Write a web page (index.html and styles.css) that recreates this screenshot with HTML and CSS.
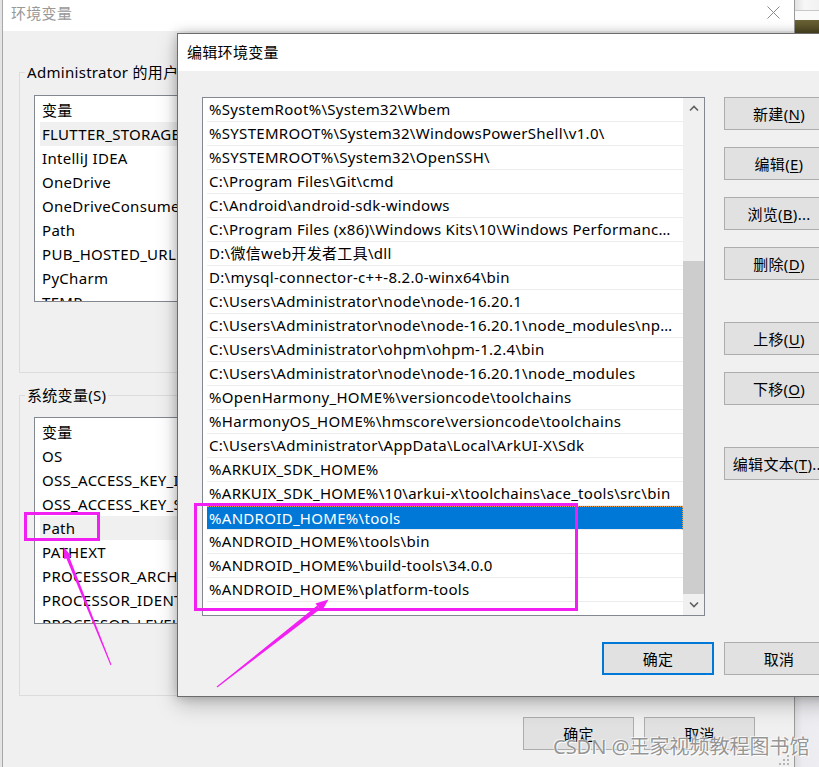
FILE: index.html
```html
<!DOCTYPE html>
<html lang="zh-CN">
<head>
<meta charset="utf-8">
<title>编辑环境变量</title>
<link rel="stylesheet" href="styles.css">
</head>
<body>
<div class="desk">
  <div class="side-top">
    <div class="st-a"></div>
    <div class="st-line"></div>
    <div class="st-b"></div>
    <div class="st-olive"></div>
  </div>
  <div class="side-bottom"></div>

  <div class="bgwin">
    <div class="titlebar">
      <span class="title">环境变量</span>
      <svg class="close" width="13" height="13" viewBox="0 0 13 13"><path d="M0.5 0.5 L12.5 12.5 M12.5 0.5 L0.5 12.5" stroke="#8a8a8a" stroke-width="1" fill="none"/></svg>
    </div>
    <div class="bbody">
      <div class="group g1">
        <span class="legend">Administrator 的用户变量(U)</span>
        <div class="list">
          <div class="lrow">变量</div>
          <div class="lrow hl">FLUTTER_STORAGE_BASE_URL</div>
          <div class="lrow">IntelliJ IDEA</div>
          <div class="lrow">OneDrive</div>
          <div class="lrow">OneDriveConsumer</div>
          <div class="lrow">Path</div>
          <div class="lrow">PUB_HOSTED_URL</div>
          <div class="lrow">PyCharm</div>
          <div class="lrow">TEMP</div>
        </div>
      </div>
      <div class="group g2">
        <span class="legend">系统变量(S)</span>
        <div class="list">
          <div class="lrow">变量</div>
          <div class="lrow">OS</div>
          <div class="lrow">OSS_ACCESS_KEY_ID</div>
          <div class="lrow">OSS_ACCESS_KEY_SECRET</div>
          <div class="lrow hl">Path</div>
          <div class="lrow">PATHEXT</div>
          <div class="lrow">PROCESSOR_ARCHITECTURE</div>
          <div class="lrow">PROCESSOR_IDENTIFIER</div>
          <div class="lrow">PROCESSOR_LEVEL</div>
        </div>
      </div>
      <div class="bactions">
        <button class="btn bbtn">确定</button>
        <button class="btn bbtn">取消</button>
      </div>
    </div>
    <svg class="grip" width="12" height="12" viewBox="0 0 12 12">
      <rect x="8" y="0" width="2" height="2" fill="#b5b5b5"/>
      <rect x="4" y="4" width="2" height="2" fill="#b5b5b5"/>
      <rect x="8" y="4" width="2" height="2" fill="#b5b5b5"/>
      <rect x="0" y="8" width="2" height="2" fill="#b5b5b5"/>
      <rect x="4" y="8" width="2" height="2" fill="#b5b5b5"/>
      <rect x="8" y="8" width="2" height="2" fill="#b5b5b5"/>
    </svg>
  </div>

  <div class="fgwin">
    <div class="fg-title">编辑环境变量</div>
    <div class="fg-body">
      <div class="fg-main">
        <div class="plist">
          <div class="rows">
            <div class="prow">%SystemRoot%\System32\Wbem</div>
            <div class="prow">%SYSTEMROOT%\System32\WindowsPowerShell\v1.0\</div>
            <div class="prow">%SYSTEMROOT%\System32\OpenSSH\</div>
            <div class="prow">C:\Program Files\Git\cmd</div>
            <div class="prow">C:\Android\android-sdk-windows</div>
            <div class="prow">C:\Program Files (x86)\Windows Kits\10\Windows Performance Toolkit\</div>
            <div class="prow">D:\微信web开发者工具\dll</div>
            <div class="prow">D:\mysql-connector-c++-8.2.0-winx64\bin</div>
            <div class="prow">C:\Users\Administrator\node\node-16.20.1</div>
            <div class="prow">C:\Users\Administrator\node\node-16.20.1\node_modules\npm\bin</div>
            <div class="prow">C:\Users\Administrator\ohpm\ohpm-1.2.4\bin</div>
            <div class="prow">C:\Users\Administrator\node\node-16.20.1\node_modules</div>
            <div class="prow">%OpenHarmony_HOME%\versioncode\toolchains</div>
            <div class="prow">%HarmonyOS_HOME%\hmscore\versioncode\toolchains</div>
            <div class="prow">C:\Users\Administrator\AppData\Local\ArkUI-X\Sdk</div>
            <div class="prow">%ARKUIX_SDK_HOME%</div>
            <div class="prow">%ARKUIX_SDK_HOME%\10\arkui-x\toolchains\ace_tools\src\bin</div>
            <div class="prow sel">%ANDROID_HOME%\tools</div>
            <div class="prow">%ANDROID_HOME%\tools\bin</div>
            <div class="prow">%ANDROID_HOME%\build-tools\34.0.0</div>
            <div class="prow">%ANDROID_HOME%\platform-tools</div>
          </div>
          <div class="vscroll">
            <div class="sarrow">
              <svg width="10" height="7" viewBox="0 0 10 7"><path d="M1 5.5 L5 1.5 L9 5.5" stroke="#606060" stroke-width="1.6" fill="none"/></svg>
            </div>
            <div class="track"><div class="thumb"></div></div>
            <div class="sarrow">
              <svg width="10" height="7" viewBox="0 0 10 7"><path d="M1 1.5 L5 5.5 L9 1.5" stroke="#606060" stroke-width="1.6" fill="none"/></svg>
            </div>
          </div>
        </div>
        <div class="side-btns">
          <button class="btn sbtn">新建(<u>N</u>)</button>
          <button class="btn sbtn">编辑(<u>E</u>)</button>
          <button class="btn sbtn">浏览(<u>B</u>)...</button>
          <button class="btn sbtn">删除(<u>D</u>)</button>
          <button class="btn sbtn gap">上移(<u>U</u>)</button>
          <button class="btn sbtn">下移(<u>O</u>)</button>
          <button class="btn sbtn gap">编辑文本(<u>T</u>)...</button>
        </div>
      </div>
      <div class="fg-actions">
        <button class="btn primary">确定</button>
        <button class="btn fbtn">取消</button>
      </div>
    </div>
  </div>

  <svg class="annot" width="819" height="767" viewBox="0 0 819 767">
    <rect x="25.5" y="513.5" width="73" height="26" fill="none" stroke="#f21ff2" stroke-width="3"/>
    <rect x="195.5" y="504.5" width="381" height="105" fill="none" stroke="#f21ff2" stroke-width="3"/>
    <polygon points="110.5,665.2 111.5,664.8 69.2,556.7 66.2,557.9" fill="#f21ff2"/>
    <polygon points="63.5,547 71.5,556.2 64.2,559.2" fill="#f21ff2"/>
    <polygon points="216.7,686.6 317.2,605.6 320,609.2 217.3,687.4" fill="#f21ff2"/>
    <polygon points="328.5,599.5 321.8,611.2 315.4,603.4" fill="#f21ff2"/>
  </svg>

  <div class="watermark">CSDN @王家视频教程图书馆</div>
</div>
</body>
</html>
```
FILE: styles.css
```css
* {
  box-sizing: border-box;
  margin: 0;
  padding: 0;
}

html, body {
  width: 819px;
  height: 767px;
  overflow: hidden;
}

body {
  background: #e8e8e8;
  font-family: "Noto Sans", "Noto Sans CJK SC", sans-serif;
  font-size: 15px;
  letter-spacing: 0.3px;
  color: #000;
}

.desk {
  position: relative;
  width: 819px;
  height: 767px;
  overflow: hidden;
  background: #e4e4e4;
}

u {
  text-decoration: underline;
  text-underline-offset: 2px;
}

/* other windows peeking on the right */
.side-top {
  position: absolute;
  left: 795px;
  top: 0;
  width: 24px;
  height: 34px;
  display: flex;
  flex-direction: column;
  background: #f4f4f4;
}
.st-a { height: 10px; background: linear-gradient(90deg, #e2e2e2, #f7f7f7 40%, #f2f2f2); }
.st-line { height: 1px; background: #c8c8c8; }
.st-b { height: 9px; background: #fafafa; }
.st-olive { flex: 1; background: linear-gradient(#6b6336, #4b4420); }

.side-bottom {
  position: absolute;
  left: 795px;
  top: 690px;
  width: 24px;
  height: 77px;
  background: linear-gradient(90deg, #dcdce0, #ececf0 30%, #eeeef2);
}

/* background window */
.bgwin {
  position: absolute;
  left: 2px;
  top: 0;
  width: 793px;
  height: 768px;
  background: #f0f0f0;
  border-left: 1px solid #a8a8a8;
  border-right: 1px solid #9a9a9a;
  display: flex;
  flex-direction: column;
}

.titlebar {
  height: 31px;
  flex: none;
  background: #fff;
  display: flex;
  align-items: flex-start;
  padding-left: 8px;
}

.title {
  color: #999;
  line-height: 20px;
  margin-top: 3px;
}

.close {
  margin-left: auto;
  margin-right: 14px;
  margin-top: 6px;
}

.bbody {
  flex: 1;
  padding: 41px 39px 0 16px;
  display: flex;
  flex-direction: column;
}

.group {
  position: relative;
  height: 301px;
  border: 1px solid #dcdcdc;
  padding: 22px 0 0 14px;
  flex: none;
}

.g2 {
  margin-top: 22px;
  padding-top: 21px;
}

.legend {
  position: absolute;
  left: 5px;
  top: -11px;
  line-height: 20px;
  padding: 0 2px;
  background: #f0f0f0;
  white-space: nowrap;
}

.list {
  width: 420px;
  height: 207px;
  border: 1px solid #828790;
  background: #fff;
  padding: 2px 0 0 5px;
  overflow: hidden;
}

.lrow {
  height: 24px;
  line-height: 24px;
  padding-left: 2px;
  white-space: nowrap;
}

.lrow.hl {
  background: #f0f0f0;
}

.bactions {
  margin-top: 21px;
  display: flex;
  justify-content: flex-end;
  gap: 10px;
}

.btn {
  font: inherit;
  letter-spacing: inherit;
  color: #000;
  background: #e1e1e1;
  border: 1px solid #adadad;
  height: 33px;
  display: flex;
  align-items: center;
  justify-content: center;
  white-space: nowrap;
  padding: 0;
}

.bbtn {
  width: 111px;
}

.grip {
  position: absolute;
  right: 3px;
  bottom: 1px;
}

/* foreground dialog */
.fgwin {
  position: absolute;
  left: 177px;
  top: 33px;
  width: 682px;
  border: 1px solid #6c6c6c;
  background: #f0f0f0;
  box-shadow: 0 0 10px rgba(0, 0, 0, 0.22), 0 8px 20px rgba(0, 0, 0, 0.22);
}

.fg-title {
  height: 37px;
  line-height: 37px;
  background: #fff;
  padding-left: 9px;
}

.fg-body {
  padding: 26px 24px 21px 24px;
}

.fg-main {
  display: flex;
  gap: 19px;
  align-items: flex-start;
}

.plist {
  width: 503px;
  height: 519px;
  flex: none;
  border: 1px solid #828790;
  background: #fff;
  display: flex;
}

.rows {
  flex: 1;
  min-width: 0;
  padding-left: 4px;
  overflow: hidden;
}

.prow {
  height: 24px;
  line-height: 23px;
  border-bottom: 1px solid #ececec;
  padding: 0 4px 0 2px;
  white-space: nowrap;
  overflow: hidden;
  text-overflow: ellipsis;
}

.prow.sel {
  background: #0078d7;
  color: #fff;
  border-top: 1px dotted #e8a050;
  border-right: 1px dotted #e8a050;
  line-height: 22px;
}

.vscroll {
  width: 21px;
  flex: none;
  background: #f0f0f0;
  display: flex;
  flex-direction: column;
}

.sarrow {
  height: 21px;
  flex: none;
  display: flex;
  align-items: center;
  justify-content: center;
}

.track {
  flex: 1;
  display: flex;
  flex-direction: column;
  justify-content: flex-end;
}

.thumb {
  height: 333px;
  background: #cdcdcd;
}

.side-btns {
  width: 110px;
  flex: none;
  display: flex;
  flex-direction: column;
}

.sbtn {
  width: 110px;
}

.sbtn + .sbtn {
  margin-top: 17px;
}

.sbtn.gap {
  margin-top: 42px;
}

.fg-actions {
  margin-top: 26px;
  display: flex;
  justify-content: flex-end;
  gap: 10px;
}

.primary {
  width: 112px;
  border: 2px solid #0078d7;
}

.fbtn {
  width: 110px;
}

/* annotations */
.annot {
  position: absolute;
  left: 0;
  top: 0;
  pointer-events: none;
}

.watermark {
  position: absolute;
  left: 553px;
  top: 735px;
  font-size: 20px;
  line-height: 24px;
  letter-spacing: 0;
  color: rgba(130, 130, 130, 0.85);
  text-shadow: 0 0 1px #fff, 1px 1px 0 rgba(255, 255, 255, 0.9), -1px -1px 0 rgba(255, 255, 255, 0.6);
  white-space: nowrap;
}
```
